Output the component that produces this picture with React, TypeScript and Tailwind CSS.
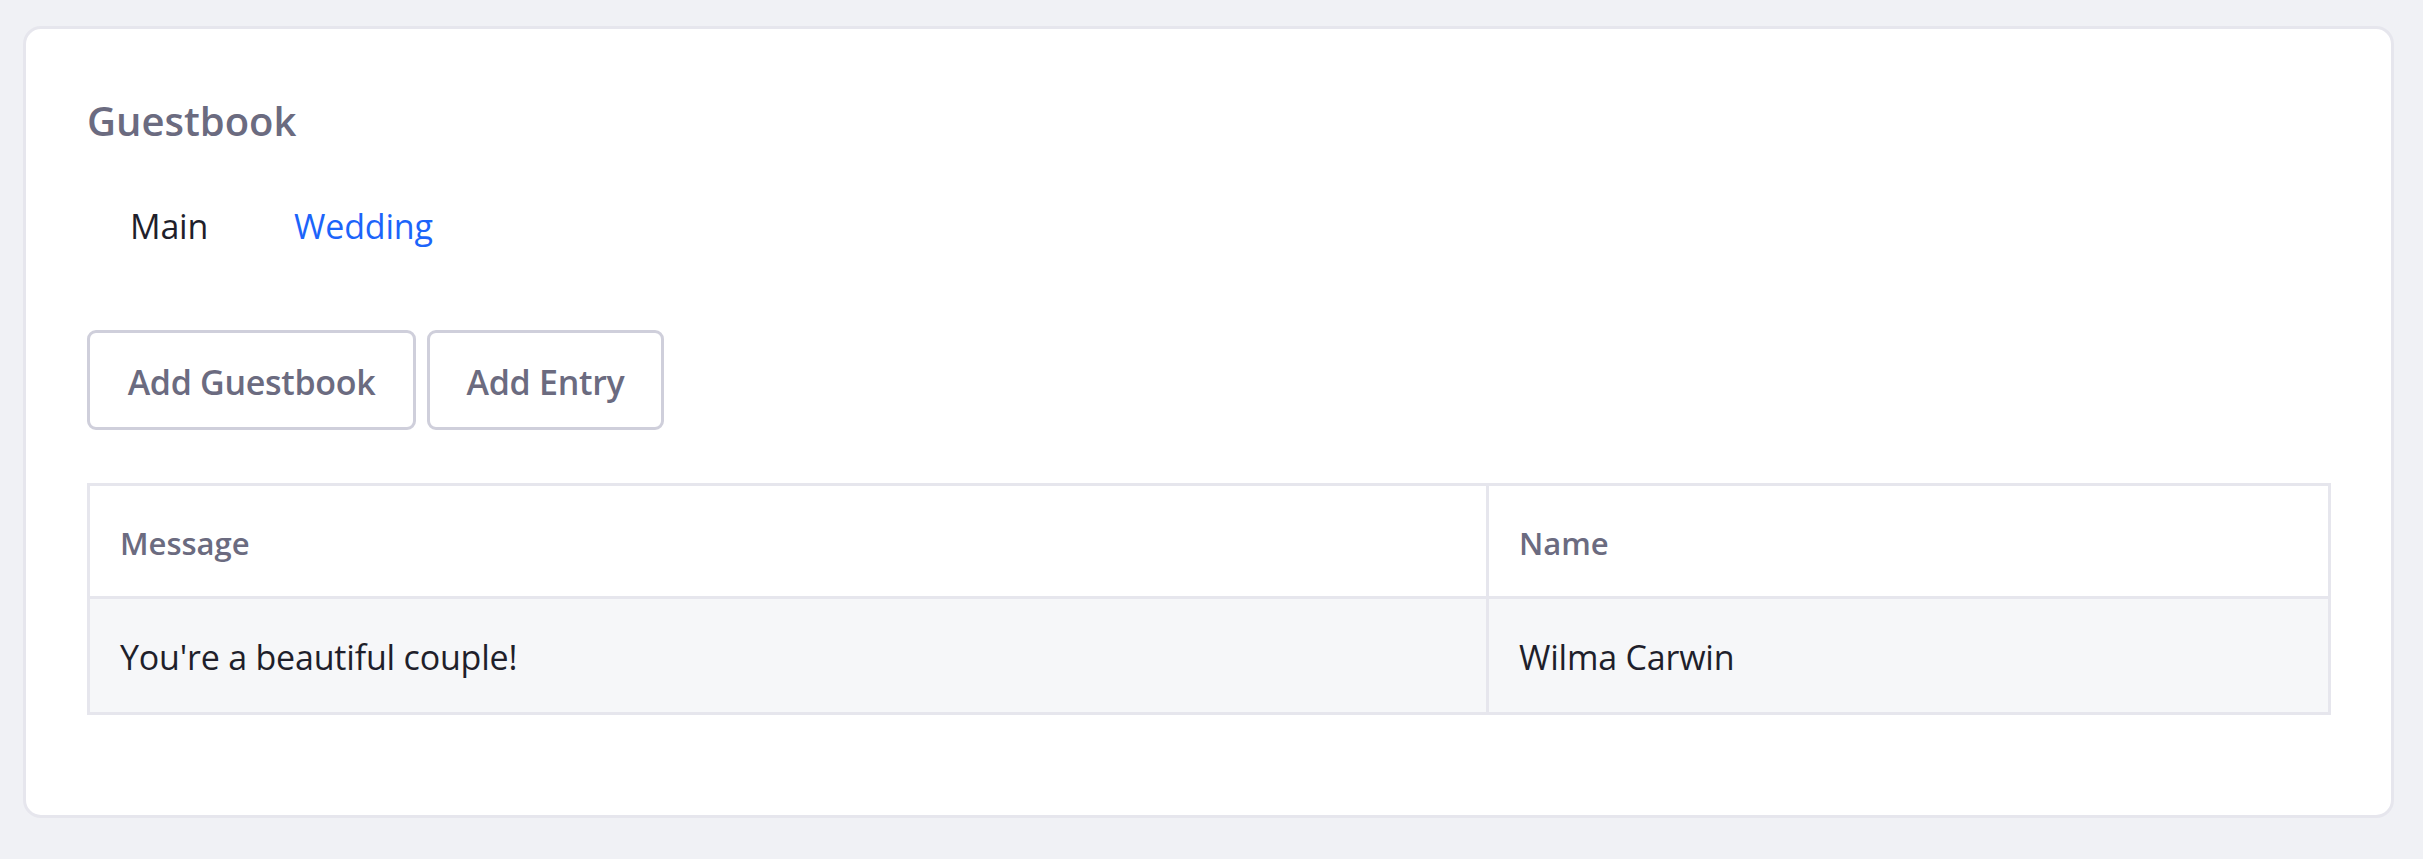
import React from "react";

const font = { fontFamily: '"Open Sans", "Noto Sans", sans-serif' };

const tabs = [
  { label: "Main", active: false },
  { label: "Wedding", active: true },
];

const entries = [{ message: "You're a beautiful couple!", name: "Wilma Carwin" }];

export default function App() {
  return (
    <div className="min-h-screen bg-[#f0f1f5] pt-[26px] pl-[23px]" style={font}>
      <div className="w-[2371px] rounded-[18px] border-[3px] border-[#e6e6ed] bg-white pt-[68px] pb-[100px] pl-[61px] pr-[60px]">
        {/* Title */}
        <h1 className="text-[40px] leading-[48px] font-semibold text-[#6b6b80]">Guestbook</h1>

        {/* Tabs */}
        <nav className="mt-[56px] flex">
          {tabs.map((t) => (
            <a
              key={t.label}
              className={`px-[43px] text-[34px] leading-[51px] tracking-[-0.2px] ${
                t.active ? "text-[#1c64fa]" : "text-[#1f1f2b]"
              }`}
            >
              {t.label}
            </a>
          ))}
        </nav>

        {/* Actions */}
        <div className="mt-[78px] flex gap-[11px]">
          <button className="w-[329px] h-[100px] rounded-[9px] border-[3px] border-[#cfcfdb] bg-white flex items-center justify-center pt-[4px] text-[34px] leading-[51px] tracking-[-0.3px] font-semibold text-[#6b6b80]">
            Add Guestbook
          </button>
          <button className="w-[237px] h-[100px] rounded-[9px] border-[3px] border-[#cfcfdb] bg-white flex items-center justify-center pt-[4px] text-[34px] leading-[51px] tracking-[-0.3px] font-semibold text-[#6b6b80]">
            Add Entry
          </button>
        </div>

        {/* Table */}
        <div className="mt-[53px] border-[3px] border-[#e6e6ed]">
          <div className="grid grid-cols-[1399px_1fr] border-b-[3px] border-[#e6e6ed]">
            <div className="h-[110px] flex items-center px-[30px] pt-[5px] border-r-[3px] border-[#e6e6ed] text-[31px] font-semibold text-[#6b6b80]">
              Message
            </div>
            <div className="h-[110px] flex items-center px-[30px] pt-[5px] text-[31px] font-semibold text-[#6b6b80]">
              Name
            </div>
          </div>
          {entries.map((e) => (
            <div key={e.name} className="grid grid-cols-[1399px_1fr] bg-[#f6f7f9]">
              <div className="h-[113px] flex items-center px-[30px] pt-[4px] border-r-[3px] border-[#e6e6ed] text-[34px] tracking-[-0.2px] text-[#1f1f2b]">
                {e.message}
              </div>
              <div className="h-[113px] flex items-center px-[30px] pt-[4px] text-[34px] tracking-[-0.2px] text-[#1f1f2b]">
                {e.name}
              </div>
            </div>
          ))}
        </div>
      </div>
    </div>
  );
}
